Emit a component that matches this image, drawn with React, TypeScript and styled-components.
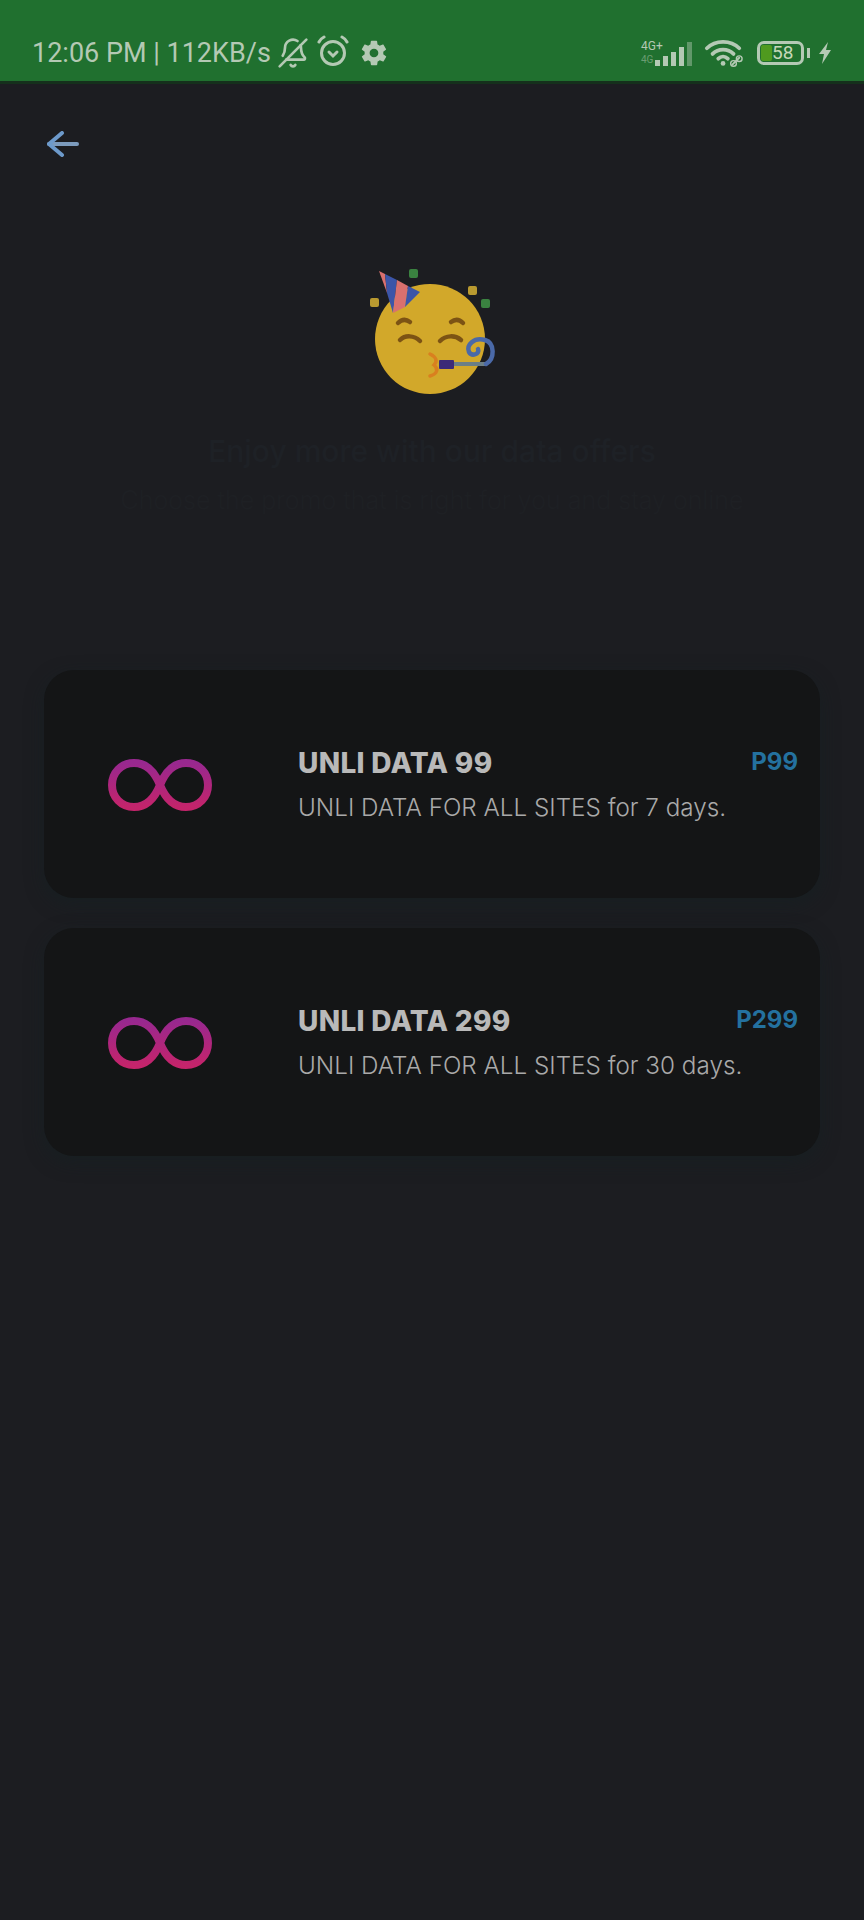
import React from 'react';
import styled, { createGlobalStyle } from 'styled-components';
import { BellOff } from 'lucide-react';
import { IoMdSettings } from 'react-icons/io';

const GlobalStyle = createGlobalStyle`
  html, body {
    margin: 0;
    padding: 0;
    background: #1c1d21;
  }
  * { box-sizing: border-box; }
`;

const Page = styled.div`
  width: 864px;
  height: 1920px;
  background: #1c1d21;
  overflow: hidden;
  font-family: "Inter", "Liberation Sans", sans-serif;
`;

const StatusBar = styled.div`
  height: 84px;
  background: #20702f;
  border-bottom: 3px solid #15301c;
  padding: 24px 32px 0 32px;
  display: flex;
  align-items: center;
  justify-content: space-between;
  color: #b4c9b4;
  font-family: "Roboto", "Liberation Sans", sans-serif;
`;

const StatusLeft = styled.div`
  display: flex;
  align-items: center;
`;

const StatusText = styled.span`
  font-size: 27px;
  line-height: 34px;
  white-space: nowrap;
  margin-right: 6px;
`;

const StatusRight = styled.div`
  display: flex;
  align-items: center;
`;

const MutedBell = styled(BellOff)`
  transform: scaleX(-1);
`;

const AlarmIcon = styled.svg`
  margin-left: 8px;
  margin-top: -4px;
`;

const GearIcon = styled(IoMdSettings)`
  margin-left: 10px;
`;

const NetworkBlock = styled.div`
  width: 52px;
  height: 26px;
  position: relative;
  margin-right: 11px;
`;

const NetworkLabel = styled.span<{ $top: number; $faint?: boolean }>`
  position: absolute;
  left: 0;
  top: ${p => p.$top}px;
  font-size: ${p => (p.$faint ? 10 : 12)}px;
  line-height: 12px;
  opacity: ${p => (p.$faint ? 0.5 : 1)};
`;

const SignalBars = styled.svg`
  position: absolute;
  right: 0;
  bottom: 0;
`;

const Battery = styled.div`
  width: 47px;
  height: 24px;
  margin-left: 13px;
  border: 3px solid #b4c9b4;
  border-radius: 7px;
  position: relative;
  display: flex;
  align-items: center;
  padding-left: 12px;
  font-size: 19px;
  &::after {
    content: '';
    position: absolute;
    right: -9px;
    top: 4px;
    width: 3px;
    height: 10px;
    background: #b4c9b4;
  }
`;

const BatteryFill = styled.div`
  position: absolute;
  left: 1px;
  top: 1px;
  bottom: 1px;
  width: 11px;
  background: #4f9a1f;
  border-radius: 2px;
`;

const BatteryValue = styled.span`
  position: relative;
  color: #c6d8b8;
`;

const BoltIcon = styled.svg`
  margin-left: 14px;
`;

const Toolbar = styled.div`
  padding: 47px 0 0 47px;
  height: 166px;
`;

const BackButton = styled.button`
  display: block;
  padding: 0;
  border: 0;
  background: none;
  width: 32px;
  height: 26px;
`;

const Hero = styled.section`
  display: flex;
  flex-direction: column;
  align-items: center;
`;

const Emoji = styled.svg`
  display: block;
  margin-right: 4px;
`;

const HeroTitle = styled.h1`
  margin: 19px 0 0;
  font-size: 30px;
  line-height: 44px;
  font-weight: 500;
  color: #1e2126;
  white-space: nowrap;
`;

const HeroText = styled.p`
  margin: 4px 0 0;
  font-size: 25px;
  line-height: 46px;
  font-weight: 300;
  color: #1e2024;
  white-space: nowrap;
`;

const CardList = styled.div`
  margin-top: 147px;
  padding: 0 44px;
  display: flex;
  flex-direction: column;
  gap: 30px;
`;

const Card = styled.article`
  height: 228px;
  background: #141516;
  border-radius: 30px;
  padding: 0 22px 0 64px;
  display: flex;
  align-items: center;
  box-shadow: 0 6px 18px rgba(20, 32, 34, 0.55);
`;

const CardIcon = styled.svg`
  flex: none;
  margin: 2px 86px 0 0;
`;

const CardBody = styled.div`
  flex: 1;
  min-width: 0;
  padding-top: 3px;
`;

const CardTop = styled.div`
  display: flex;
  justify-content: space-between;
  align-items: flex-start;
`;

const CardTitle = styled.h2`
  margin: 0;
  font-size: 28px;
  line-height: 38px;
  font-weight: 800;
  letter-spacing: 0.3px;
  color: #b9b9b9;
  white-space: nowrap;
`;

const Price = styled.span`
  font-size: 24px;
  line-height: 36px;
  font-weight: 700;
  color: #24719f;
`;

const CardText = styled.p`
  margin: 7px 0 0;
  font-size: 24.25px;
  line-height: 38px;
  font-weight: 300;
  color: #a9a9a9;
  white-space: nowrap;
`;

const plans = [
  { id: 'g1', name: 'UNLI DATA 99', price: 'P99', text: 'UNLI DATA FOR ALL SITES for 7 days.' },
  { id: 'g2', name: 'UNLI DATA 299', price: 'P299', text: 'UNLI DATA FOR ALL SITES for 30 days.' },
];

const Infinity8: React.FC<{ id: string }> = ({ id }) => (
  <CardIcon width="104" height="54" viewBox="0 0 104 54" fill="none">
    <defs>
      <linearGradient id={id} x1="0" y1="0" x2="0" y2="1">
        <stop offset="0" stopColor="#98288f" />
        <stop offset="1" stopColor="#c4246b" />
      </linearGradient>
    </defs>
    <path
      d="M52 27C46 12 38 5 26 5C13 5 4 15 4 27C4 39 13 49 26 49C38 49 46 42 52 27C58 12 66 5 78 5C91 5 100 15 100 27C100 39 91 49 78 49C66 49 58 42 52 27Z"
      stroke={`url(#${id})`}
      strokeWidth="8"
    />
  </CardIcon>
);

const PartyFace = () => (
  <Emoji width="180" height="160" viewBox="0 0 180 160" fill="none">
    <circle cx="90" cy="89" r="55" fill="#d2a82a" />
    <path d="M39 21L45 24L47 43Z" fill="#d9706e" />
    <path d="M45 24L57 30L53 63L47 43Z" fill="#3c55a8" />
    <path d="M57 30L68 36L65 57L53 63Z" fill="#d9706e" />
    <path d="M68 36L80 42L65 57Z" fill="#3c55a8" />
    <rect x="69" y="19" width="9" height="9" rx="2" fill="#3a8240" />
    <rect x="128" y="36" width="9" height="9" rx="2" fill="#b99a30" />
    <rect x="141" y="49" width="9" height="9" rx="2" fill="#3a8240" />
    <rect x="30" y="48" width="9" height="9" rx="2" fill="#b99a30" />
    <g stroke="#7c5314" strokeWidth="4.5" strokeLinecap="round">
      <path d="M58 73C62 69 66 69 70 72" />
      <path d="M111 72C115 69 119 69 123 73" />
      <path d="M60 90C65 85 74 85 80 91" />
      <path d="M100 91C106 85 115 85 121 90" />
    </g>
    <path d="M90 104C96 107 98 111 94 115C99 119 97 124 90 126" stroke="#d9801f" strokeWidth="3.5" strokeLinecap="round" />
    <path d="M113 114H146" stroke="#6c7f86" strokeWidth="4" />
    <path d="M146 114C155 109 155 93 145 90C134 87 126 95 129 102C132 107 140 104 138 99" stroke="#4a69a8" strokeWidth="4.5" strokeLinecap="round" />
    <rect x="99" y="110" width="15" height="9" rx="1" fill="#3c2a78" />
  </Emoji>
);

export default function App() {
  return (
    <Page>
      <GlobalStyle />
      <StatusBar>
        <StatusLeft>
          <StatusText>12:06 PM | 112KB/s</StatusText>
          <MutedBell size={32} strokeWidth={2} />
          <AlarmIcon width="32" height="32" viewBox="0 0 32 32" fill="none" stroke="currentColor" strokeWidth="3" strokeLinecap="round">
            <circle cx="16" cy="18" r="11.500" />
            <path d="M2 7C3 5 5 3 7 2" />
            <path d="M30 7C29 5 27 3 25 2" />
            <path d="M12 17L16 21L20 17" />
          </AlarmIcon>
          <GearIcon size={30} />
        </StatusLeft>
        <StatusRight>
          <NetworkBlock>
            <NetworkLabel $top={0}>4G+</NetworkLabel>
            <NetworkLabel $top={14} $faint>4G</NetworkLabel>
            <SignalBars width="38" height="24" viewBox="0 0 38 24" fill="currentColor">
              <rect x="0" y="18" width="5" height="6" />
              <rect x="8" y="14" width="5" height="10" />
              <rect x="16" y="10" width="5" height="14" />
              <rect x="24" y="5" width="5" height="19" />
              <rect x="32" y="0" width="5" height="24" opacity="0.45" />
            </SignalBars>
          </NetworkBlock>
          <svg width="40" height="30" viewBox="0 0 42 30" fill="none" stroke="currentColor" strokeLinecap="round">
            <path d="M3 10C12 1 28 1 37 10" strokeWidth="4" />
            <path d="M9 16C15 10 25 10 31 16" strokeWidth="4" />
            <path d="M15 21C18 18 22 18 25 21" strokeWidth="4" />
            <circle cx="20" cy="26" r="2.500" fill="currentColor" stroke="none" />
            <path d="M30 27L37 20" strokeWidth="2" />
            <circle cx="31" cy="26" r="3" strokeWidth="1.500" />
            <circle cx="37" cy="21" r="3" strokeWidth="1.500" />
          </svg>
          <Battery>
            <BatteryFill />
            <BatteryValue>58</BatteryValue>
          </Battery>
          <BoltIcon width="14" height="22" viewBox="0 0 14 22" fill="currentColor">
            <path d="M10 0L1 12H6L4 22L13 8H8Z" />
          </BoltIcon>
        </StatusRight>
      </StatusBar>

      <Toolbar>
        <BackButton aria-label="Back">
          <svg width="32" height="26" viewBox="0 0 32 26" fill="none" strokeLinecap="round" strokeLinejoin="round" strokeWidth="4">
            <path d="M2 13H30" stroke="#7c9bbd" />
            <path d="M15 2L2 13L15 24" stroke="#6d9acb" />
          </svg>
        </BackButton>
      </Toolbar>

      <Hero>
        <PartyFace />
        <HeroTitle>Enjoy more with our data offers</HeroTitle>
        <HeroText>Choose the promo that is right for you and stay online</HeroText>
      </Hero>

      <CardList>
        {plans.map(plan => (
          <Card key={plan.id}>
            <Infinity8 id={plan.id} />
            <CardBody>
              <CardTop>
                <CardTitle>{plan.name}</CardTitle>
                <Price>{plan.price}</Price>
              </CardTop>
              <CardText>{plan.text}</CardText>
            </CardBody>
          </Card>
        ))}
      </CardList>
    </Page>
  );
}
